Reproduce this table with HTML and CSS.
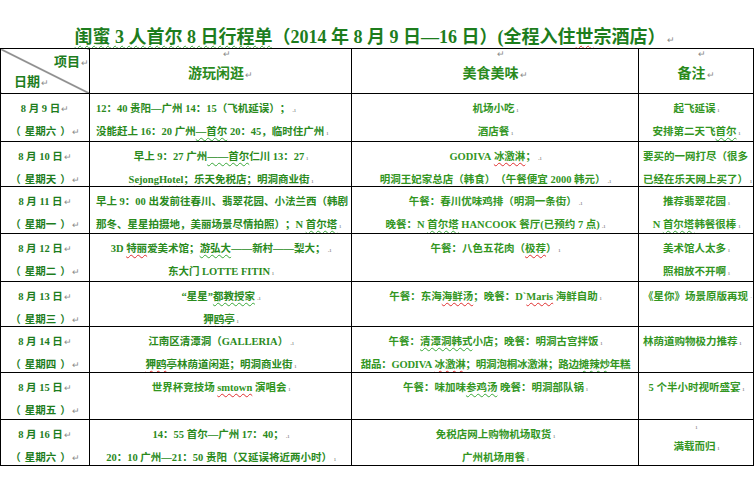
FILE: index.html
```html
<!DOCTYPE html>
<html lang="zh-CN">
<head>
<meta charset="utf-8">
<title>闺蜜3人首尔8日行程单</title>
<link rel="stylesheet" href="styles.css">
</head>
<body>
<div class="title"><span class="sq-g">闺蜜 3 人首尔 8 日行程单</span>（2014 年 8 月 9 日—16 日）(全程入住<span class="sq-r">世</span>宗酒店）<span class="pm">↵</span></div>
<table class="plan">
  <colgroup>
    <col class="c1"><col class="c2"><col class="c3"><col class="c4">
  </colgroup>
  <tr class="r-head">
    <td class="corner">
      <div class="k-item">项目<span class="pm">↵</span></div>
      <div class="k-date">日期<span class="pm">↵</span></div>
    </td>
    <td class="hcell"><div class="mark">↵</div><div class="hd">游玩闲逛<span class="pm">↵</span></div></td>
    <td class="hcell"><div class="mark">↵</div><div class="hd">美食美味<span class="pm">↵</span></div></td>
    <td class="hcell"><div class="mark">↵</div><div class="hd">备注<span class="pm">↵</span></div></td>
  </tr>
  <tr class="r1">
    <td class="date"><div>8 月 9 日<span class="pm">↵</span></div><div>（<span class="wk">星期六</span>）<span class="pm">↵</span></div></td>
    <td class="left"><div>12：40 贵阳—广州 14：15（飞机延误）；<span class="cm">.ı</span></div><div>没能赶上 16：20 广州<span class="sq-g">—首尔</span> 20：45，临时住广州<span class="cm">ı</span></div></td>
    <td class="lite"><div>机场小吃<span class="cm">ı</span></div><div>酒店餐<span class="cm">ı</span></div></td>
    <td class="lite"><div>起飞延误<span class="cm">ı</span></div><div>安排第二天飞<span class="sq-g">首尔</span><span class="cm">ı</span></div></td>
  </tr>
  <tr class="r2">
    <td class="date"><div>8 月 10 日<span class="pm">↵</span></div><div>（<span class="wk">星期天</span>）<span class="pm">↵</span></div></td>
    <td><div>早上 9：27 广州<span class="sq-g">——首尔</span>仁川 13：27<span class="cm">ı</span></div><div><span class="sq-r">SejongHotel</span>；乐天免税店；明洞商业街<span class="cm">ı</span></div></td>
    <td class="lite"><div><b>GODIVA</b> <span class="sq-r">冰激淋</span>；<span class="cm">.ı</span></div><div>明洞王妃家总店（韩食）（午餐便宜 2000 韩元）<span class="cm">.ı</span></div></td>
    <td class="lite left rm"><div>要买的一网打尽（很多</div><div>已经在乐天网上买了）<span class="cm">ı</span></div></td>
  </tr>
  <tr class="r3">
    <td class="date"><div>8 月 11 日<span class="pm">↵</span></div><div>（<span class="wk">星期一</span>）<span class="pm">↵</span></div></td>
    <td class="left"><div>早上 9：00 出发前往春川、翡翠花园、小法兰西（韩剧</div><div>那冬、星星拍摄地，美丽场景尽情拍照）；N <span class="sq-g">首尔塔</span><span class="cm">ı</span></div></td>
    <td class="lite"><div>午餐：春川优味鸡排（明洞一条街）<span class="cm">.ı</span></div><div>晚餐：N <span class="sq-g">首尔塔</span> <b>HANCOOK</b> 餐厅(已预约 7 点)<span class="cm">.ı</span></div></td>
    <td class="lite"><div>推荐翡翠花园<span class="cm">ı</span></div><div>N <span class="sq-g">首尔塔</span>韩餐很棒<span class="cm">ı</span></div></td>
  </tr>
  <tr class="r4">
    <td class="date"><div>8 月 12 日<span class="pm">↵</span></div><div>（<span class="wk">星期二</span>）<span class="pm">↵</span></div></td>
    <td><div>3D <span class="sq-r">特丽</span>爱美术馆；<span class="sq-g">游弘大</span>——新村——梨大；<span class="cm">.ı</span></div><div>东大门 LOTTE FITIN<span class="cm">ı</span></div></td>
    <td class="lite"><div>午餐：八色五花肉（<span class="sq-r">极荐</span>）<span class="cm">ı</span></div><div></div></td>
    <td class="lite"><div>美术馆人太多<span class="cm">ı</span></div><div>照相放不开啊<span class="cm">ı</span></div></td>
  </tr>
  <tr class="r5">
    <td class="date"><div>8 月 13 日<span class="pm">↵</span></div><div>（<span class="wk">星期三</span>）<span class="pm">↵</span></div></td>
    <td><div>“星星”<span class="sq-g">都教授家</span><span class="cm">.ı</span></div><div><span class="sq-r">狎鸥</span>亭<span class="cm">ı</span></div></td>
    <td class="lite"><div>午餐：东海<span class="sq-r">海鲜汤</span>；晚餐：<b>D`<span class="sq-r">Maris</span></b> 海鲜自助<span class="cm">ı</span></div><div></div></td>
    <td class="lite left rm"><div>《星你》场景原版再现<span class="cm">·</span></div><div></div></td>
  </tr>
  <tr class="r6">
    <td class="date"><div>8 月 14 日<span class="pm">↵</span></div><div>（<span class="wk">星期四</span>）<span class="pm">↵</span></div></td>
    <td><div>江南区清潭洞（GALLERIA）<span class="cm">.ı</span></div><div><span class="sq-r">狎鸥</span>亭林荫道闲逛；明洞商业街<span class="cm">ı</span></div></td>
    <td class="lite"><div>午餐：<span class="sq-g">清潭洞韩式</span>小店；晚餐：明洞古宫拌饭<span class="cm">ı</span></div><div class="tight">甜品：<b>GODIVA</b> <span class="sq-r">冰激淋</span>；明洞泡桐冰激淋；路边<span class="sq-g">摊辣炒</span>年糕</div></td>
    <td class="lite left rm"><div>林荫道购物极力推荐<span class="cm">ı</span></div><div></div></td>
  </tr>
  <tr class="r7">
    <td class="date"><div>8 月 15 日<span class="pm">↵</span></div><div>（<span class="wk">星期五</span>）<span class="pm">↵</span></div></td>
    <td class="lite"><div>世界杯竞技场 <span class="sq-r">smtown</span> 演唱会<span class="cm">ı</span></div><div></div></td>
    <td class="lite"><div>午餐：味加味<span class="sq-g">参鸡汤</span> 晚餐：明洞部队锅<span class="cm">ı</span></div><div></div></td>
    <td class="lite"><div>5 个半小时视听盛宴<span class="cm">ı</span></div><div></div></td>
  </tr>
  <tr class="r8">
    <td class="date"><div>8 月 16 日<span class="pm">↵</span></div><div>（<span class="wk">星期六</span>）<span class="pm">↵</span></div></td>
    <td><div>14：55 首尔—广州 17：40；<span class="cm">.ı</span></div><div>20：10 广州—21：50 贵阳（又延误将近两小时）<span class="cm">ı</span></div></td>
    <td class="lite"><div>免税店网上购物机场取货<span class="cm">ı</span></div><div>广州机场用餐<span class="cm">ı</span></div></td>
    <td class="lite end"><div class="mark2">ı</div><div class="big">满载而归<span class="cm">ı</span></div></td>
  </tr>
</table>
</body>
</html>
```

FILE: styles.css
```css
html, body {
  margin: 0;
  padding: 0;
  background: #ffffff;
}

body {
  font-family: "Liberation Serif", "Noto Sans CJK SC", serif;
  color: #2a8a1c;
  width: 755px;
  height: 502px;
  overflow: hidden;
  text-spacing-trim: space-all;
}

.title {
  height: 21px;
  padding-top: 27px;
  line-height: 21px;
  font-size: 18px;
  font-weight: bold;
  color: #1d7d1d;
  text-align: center;
  padding-right: 6px;
  white-space: nowrap;
  overflow: hidden;
}

.pm {
  color: #8a8a8a;
  font-weight: normal;
  font-size: 9px;
  margin-left: 1px;
}

.cm {
  color: #8a8a8a;
  font-weight: normal;
  font-size: 7px;
  margin-left: 2px;
}

.wk {
  margin: 0 4px;
}

.sq-r {
  text-decoration: underline wavy #e03030;
  text-decoration-thickness: 1px;
  text-underline-offset: 2px;
}

.sq-g {
  text-decoration: underline wavy #3aa83a;
  text-decoration-thickness: 1px;
  text-underline-offset: 2px;
}

.plan {
  border-collapse: collapse;
  table-layout: fixed;
  width: 753px;
  margin-left: 0;
}

.c1 { width: 89px; }
.c2 { width: 262px; }
.c3 { width: 287px; }
.c4 { width: 115px; }

.plan td {
  border: 1.5px solid #000;
  vertical-align: top;
  padding: 3px 5px 0 6px;
  font-size: 10.5px;
  line-height: 23px;
  font-weight: bold;
  text-align: center;
  white-space: nowrap;
  overflow: hidden;
}

.plan td > div {
  height: 23px;
}

.plan td > div:last-child {
  height: 16px;
}

.plan td.lite {
  color: #33961f;
}

.plan td.left {
  text-align: left;
}

.plan td.rm {
  padding-left: 4px;
  padding-right: 0;
}

.r-head { height: 45px; }
.r1 { height: 48px; }
.r2 { height: 45px; }
.r3 { height: 47px; }
.r4 { height: 48px; }
.r5 { height: 45px; }
.r6 { height: 46px; }
.r7 { height: 47px; }
.r8 { height: 46px; }

.plan td.corner {
  padding: 0;
  background: linear-gradient(to top right, transparent calc(50% - 0.8px), #000 50%, transparent calc(50% + 0.8px));
  font-size: 13px;
  line-height: 20px;
  color: #1d7d1d;
}

.plan td.corner > div {
  height: 20px;
}

.k-item {
  text-align: right;
  padding-top: 3px;
}

.k-date {
  text-align: left;
  padding-left: 13px;
}

.plan td.hcell {
  padding: 0;
}

.plan td.hcell > .mark {
  height: 10px;
  line-height: 10px;
  font-size: 9px;
  color: #8a8a8a;
  font-weight: normal;
  padding-left: 12px;
}

.plan td.hcell > .hd {
  height: 30px;
  line-height: 30px;
  font-size: 14px;
  color: #2a8a1c;
}

.plan td.date {
  padding-left: 2px;
  padding-right: 2px;
  color: #1d7d1d;
}

.tight {
  letter-spacing: -0.2px;
}

.plan td.end {
  padding-top: 0;
}

.plan td.end > .mark2 {
  height: 14px;
  line-height: 14px;
  font-size: 7px;
  color: #8a8a8a;
  font-weight: normal;
}

.plan td.end > .big {
  height: 26px;
  line-height: 26px;
}
```
